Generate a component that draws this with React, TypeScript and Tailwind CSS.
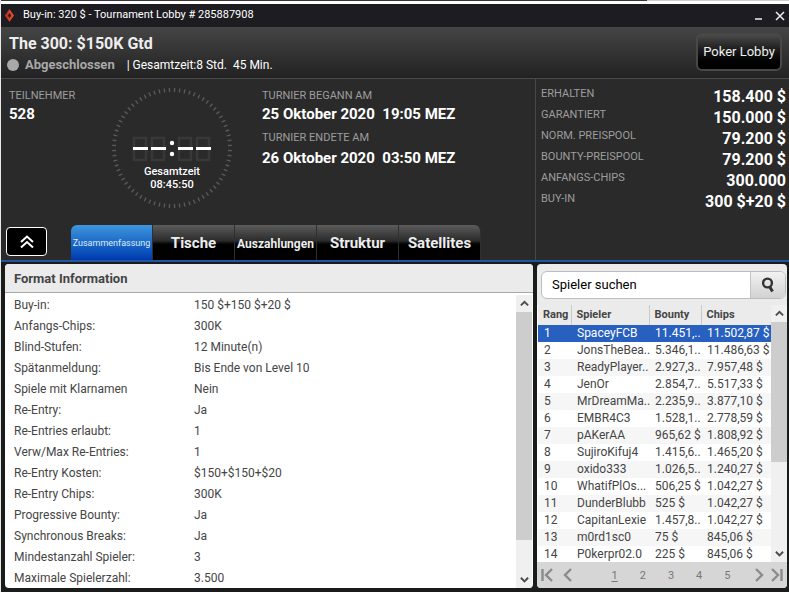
import { useState } from "react";

const FORMAT: [string, string][] = [
  ["Buy-in:", "150 $+150 $+20 $"],
  ["Anfangs-Chips:", "300K"],
  ["Blind-Stufen:", "12 Minute(n)"],
  ["Spätanmeldung:", "Bis Ende von Level 10"],
  ["Spiele mit Klarnamen", "Nein"],
  ["Re-Entry:", "Ja"],
  ["Re-Entries erlaubt:", "1"],
  ["Verw/Max Re-Entries:", "1"],
  ["Re-Entry Kosten:", "$150+$150+$20"],
  ["Re-Entry Chips:", "300K"],
  ["Progressive Bounty:", "Ja"],
  ["Synchronous Breaks:", "Ja"],
  ["Mindestanzahl Spieler:", "3"],
  ["Maximale Spielerzahl:", "3.500"],
];

const PLAYERS = [
  { name: "SpaceyFCB", bounty: "11.451,..", chips: "11.502,87 $" },
  { name: "JonsTheBea..", bounty: "5.346,1..", chips: "11.486,63 $" },
  { name: "ReadyPlayer..", bounty: "2.927,3..", chips: "7.957,48 $" },
  { name: "JenOr", bounty: "2.854,7..", chips: "5.517,33 $" },
  { name: "MrDreamMa..", bounty: "2.235,9..", chips: "3.877,10 $" },
  { name: "EMBR4C3", bounty: "1.528,1..", chips: "2.778,59 $" },
  { name: "pAKerAA", bounty: "965,62 $", chips: "1.808,92 $" },
  { name: "SujiroKifuj4", bounty: "1.415,6..", chips: "1.465,20 $" },
  { name: "oxido333", bounty: "1.026,5..", chips: "1.240,27 $" },
  { name: "WhatifPlOs...", bounty: "506,25 $", chips: "1.042,27 $" },
  { name: "DunderBlubb", bounty: "525 $", chips: "1.042,27 $" },
  { name: "CapitanLexie", bounty: "1.457,8..", chips: "1.042,27 $" },
  { name: "m0rd1sc0", bounty: "75 $", chips: "845,06 $" },
  { name: "P0kerpr02.0", bounty: "225 $", chips: "845,06 $" },
];

const PRIZES = [
  ["ERHALTEN", "158.400 $"],
  ["GARANTIERT", "150.000 $"],
  ["NORM. PREISPOOL", "79.200 $"],
  ["BOUNTY-PREISPOOL", "79.200 $"],
  ["ANFANGS-CHIPS", "300.000"],
  ["BUY-IN", "300 $+20 $"],
];

const TABS = [
  { label: "Zusammenfassung", size: "text-[9px]" },
  { label: "Tische", size: "text-[15px] font-bold" },
  { label: "Auszahlungen", size: "text-[12px] font-bold" },
  { label: "Struktur", size: "text-[15px] font-bold" },
  { label: "Satellites", size: "text-[15px] font-bold" },
];

const TICKS = Array.from({ length: 72 }, (_, i) => i * 5 + 2.5);

function Clock() {
  return (
    <div className="relative size-[120px] shrink-0">
      <svg viewBox="0 0 120 120" className="size-full" aria-hidden>
        {TICKS.map((deg) => (
          <path key={deg} d="M60 0v4" stroke="#595959" strokeWidth="1.4" transform={`rotate(${deg} 60 60)`} />
        ))}
        {[22, 40, 67, 85].map((x) => (
          <g key={x} fill="none">
            <path d={`M${x} 50h12v22h-12z`} stroke="#383838" strokeWidth="2.6" />
            <path d={`M${x - 1} 60.5h15`} stroke="#fff" strokeWidth="3" />
          </g>
        ))}
        <circle cx="60" cy="55" r="2.2" fill="#fff" />
        <circle cx="60" cy="66" r="2.2" fill="#fff" />
      </svg>
      <p className="absolute inset-x-0 top-[77px] text-center text-[11px] leading-[13px] font-medium text-white">
        Gesamtzeit
        <br />
        08:45:50
      </p>
    </div>
  );
}

function Chevron({ up = false }: { up?: boolean }) {
  return (
    <svg viewBox="0 0 10 8" className="w-[9px]" fill="none" stroke="#4c4c4c" strokeWidth="2.2" aria-hidden>
      <path d={up ? "M1 6l4-4 4 4" : "M1 2l4 4 4-4"} />
    </svg>
  );
}

function ScrollBar({ thumb }: { thumb: string }) {
  return (
    <div className="flex w-4 shrink-0 flex-col bg-[#f0f0f0]">
      <button aria-label="Nach oben" className="flex h-[17px] items-center justify-center">
        <Chevron up />
      </button>
      <div className="min-h-0 flex-1">
        <div className={`bg-[#cdcdcd] ${thumb}`} />
      </div>
      <button aria-label="Nach unten" className="flex h-[17px] items-center justify-center">
        <Chevron />
      </button>
    </div>
  );
}

function PageArrow({ label, d }: { label: string; d: string }) {
  return (
    <button aria-label={label} className="flex items-center">
      <svg viewBox="0 0 12 14" className="h-[14px] w-3" fill="none" stroke="#8b8b8b" strokeWidth="2.4" aria-hidden>
        <path d={d} />
      </svg>
    </button>
  );
}

export default function App() {
  const [tab, setTab] = useState(0);
  const [page, setPage] = useState(1);

  return (
    <div className="flex h-screen min-h-[480px] flex-col overflow-hidden border-l border-[#e8e8e8] bg-[#1a1c1c] font-[Roboto,sans-serif] text-[12px] text-white">
      <div className="flex h-1 shrink-0 flex-col bg-white">
        <div className="flex h-px">
          <div className="w-[82%] bg-[#3b3438]" />
          <div className="flex-1 bg-[#cfcfcf]" />
        </div>
      </div>

      <div className="flex h-[23px] shrink-0 items-center bg-[#1d1c21] pr-1 pl-1">
        <svg viewBox="0 0 10 14" className="h-[13px] w-[9px]" aria-hidden>
          <path d="M5 0l5 7-5 7-5-7z" fill="#e2492b" />
          <path d="M5 4l2 3-2 3-2-3z" fill="#3b1915" />
          <path d="M5 0L0 7l5 7-2-7z" fill="#b33424" />
        </svg>
        <span className="ml-[9px] flex-1 pb-px text-[11px]">Buy-in: 320 $ - Tournament Lobby # 285887908</span>
        <button aria-label="Minimieren" className="mr-3">
          <svg viewBox="0 0 9 10" className="h-[10px] w-[9px]" aria-hidden>
            <path d="M1 8h7" stroke="#fff" strokeWidth="1.4" />
          </svg>
        </button>
        <button aria-label="Schließen">
          <svg viewBox="0 0 10 10" className="size-[10px]" aria-hidden>
            <path d="M1 1l8 8M9 1L1 9" stroke="#e8e8e8" strokeWidth="1.6" />
          </svg>
        </button>
      </div>

      <header className="flex h-[52px] shrink-0 items-start justify-between border-b border-[#4a4a4a] bg-linear-to-b from-[#454545] to-[#222222] pt-[6px] pr-[7px] pl-2">
        <div>
          <h1 className="text-[16px] leading-[22px] font-bold text-[#ededed]">The 300: $150K Gtd</h1>
          <p className="flex items-center text-[12px] leading-5">
            <span className="-ml-0.5 size-3 rounded-full bg-[#a9a9a9]" />
            <span className="ml-1.5 text-[13px] font-bold text-[#a9a9a9]">Abgeschlossen</span>
            <span className="ml-3 whitespace-pre">| Gesamtzeit:8 Std.  45 Min.</span>
          </p>
        </div>
        <button className="h-[38px] w-[86px] rounded-md border-2 border-[#484848] bg-linear-to-b from-[#4a4a4a] via-[#161616] via-50% to-black pb-px text-[13px] text-[#f0f0f0]">
          Poker Lobby
        </button>
      </header>

      <div className="flex h-[183px] shrink-0 border-b-2 border-[#22559d] bg-[#2a2a2a]">
        <div className="flex min-w-0 flex-1 flex-col justify-between">
          <div className="flex pt-[9px] pl-2">
            <div className="w-[103px]">
              <p className="text-[11px] leading-4 text-[#9d9d9d]">TEILNEHMER</p>
              <p className="text-[15px] leading-5 font-bold">528</p>
            </div>
            <Clock />
            <div className="ml-[30px]">
              <p className="text-[11px] leading-4 text-[#9d9d9d]">TURNIER BEGANN AM</p>
              <p className="text-[15px] leading-5 font-bold whitespace-pre">25 Oktober 2020  19:05 MEZ</p>
              <p className="mt-1.5 text-[11px] leading-4 text-[#9d9d9d]">TURNIER ENDETE AM</p>
              <p className="mt-0.5 text-[15px] leading-5 font-bold whitespace-pre">26 Oktober 2020  03:50 MEZ</p>
            </div>
          </div>
          <div className="flex items-end">
            <button aria-label="Einklappen" className="mb-1 ml-[5px] flex h-[29px] w-[41px] items-center justify-center rounded border border-white bg-black">
              <svg viewBox="0 0 14 13" className="h-[13px] w-[14px]" fill="none" stroke="#fff" strokeWidth="2" aria-hidden>
                <path d="M1 7l6-5.5L13 7M1 12.5L7 7l6 5.5" />
              </svg>
            </button>
            <nav className="ml-6 flex">
              {TABS.map((t, i) => (
                <button
                  key={t.label}
                  onClick={() => setTab(i)}
                  className={`h-[35px] w-[82px] border-r border-[#2f2f2f] pt-0.5 first:rounded-tl-md last:rounded-tr-md ${t.size} ${
                    tab === i
                      ? "bg-linear-to-b from-[#3f96dc] to-[#0439b0] text-[#dcebff]"
                      : "bg-linear-to-b from-[#5c5c5c] from-0% via-[#2c2c2c] via-45% to-black to-60% text-[#ededed]"
                  }`}
                >
                  {t.label}
                </button>
              ))}
            </nav>
          </div>
        </div>
        <dl className="w-[254px] shrink-0 border-l border-[#484848] pt-[7px] pr-[3px] pl-[5px]">
          {PRIZES.map(([label, value]) => (
            <div key={label} className="flex h-[21px] justify-between">
              <dt className="text-[11px] leading-4 text-[#9d9d9d]">{label}</dt>
              <dd className="text-[16px] leading-[21px] font-bold">{value}</dd>
            </div>
          ))}
        </dl>
      </div>

      <main className="flex min-h-0 flex-1 gap-1 pt-0.5 pr-0.5 pb-1 pl-1">
        <section className="flex min-w-0 flex-1 flex-col overflow-hidden rounded bg-white text-[#454545]">
          <h2 className="h-[29px] shrink-0 border-b border-[#a8a8a8] bg-[#ebebeb] pl-[9px] text-[13px] leading-[29px] font-bold text-[#444]">
            Format Information
          </h2>
          <div className="flex min-h-0 flex-1">
            <div className="min-w-0 flex-1 overflow-hidden pt-px">
              <table className="w-full table-fixed text-left">
                <tbody>
                  {FORMAT.map(([label, value]) => (
                    <tr key={label} className="h-[21px]">
                      <th scope="row" className="w-[189px] p-0 pl-[9px] font-normal">{label}</th>
                      <td className="p-0">{value}</td>
                    </tr>
                  ))}
                </tbody>
              </table>
            </div>
            <div className="mt-0.5 mr-px flex">
              <ScrollBar thumb="h-[88%]" />
            </div>
          </div>
        </section>

        <aside className="flex w-[250px] shrink-0 flex-col overflow-hidden rounded bg-[#ebebeb] text-[#454545]">
          <form className="mt-[7px] mr-px ml-1 flex h-7 shrink-0 overflow-hidden rounded-md border border-[#bdbdbd] bg-white">
            <input
              aria-label="Spieler suchen"
              defaultValue="Spieler suchen"
              className="min-w-0 flex-1 pl-2.5 text-[13px] text-black outline-none"
            />
            <button type="button" aria-label="Suchen" className="flex w-[35px] items-center justify-center border-l border-[#c4c4c4] bg-linear-to-b from-[#f2f2f2] to-[#d2d2d2]">
              <svg viewBox="0 0 14 16" className="h-4 w-[14px]" fill="none" stroke="#333" aria-hidden>
                <circle cx="6.5" cy="6" r="4.4" strokeWidth="2.4" />
                <path d="M8.5 9.5l3 5" strokeWidth="3" />
              </svg>
            </button>
          </form>
          <div className="mt-1.5 flex min-h-0 flex-1 bg-white pl-px">
            <div className="min-w-0 flex-1 overflow-hidden">
              <table className="w-full table-fixed text-left whitespace-nowrap">
                <thead className="bg-[#ebebeb]">
                  <tr className="h-5 text-[11px]">
                    <th className="w-[33px] border-r border-[#c9c9c9] p-0 pl-[5px]">Rang</th>
                    <th className="w-[78px] border-r border-[#c9c9c9] p-0 pl-[5px]">Spieler</th>
                    <th className="w-[52px] border-r border-[#c9c9c9] p-0 pl-[5px]">Bounty</th>
                    <th className="p-0 pl-[5px]">Chips</th>
                  </tr>
                </thead>
                <tbody>
                  {PLAYERS.map((p, i) => (
                    <tr key={p.name} className={`h-[17px] leading-[17px] ${i === 0 ? "bg-[#2860c0] text-white" : i % 2 === 0 ? "bg-[#f6f6f6]" : "bg-white"}`}>
                      <td className="p-0 pl-1.5">{i + 1}</td>
                      <td className="p-0 pl-1.5">{p.name}</td>
                      <td className="p-0 pl-1.5">{p.bounty}</td>
                      <td className="p-0 pl-1.5">{p.chips}</td>
                    </tr>
                  ))}
                </tbody>
              </table>
            </div>
            <ScrollBar thumb="h-[63%]" />
          </div>
          <footer className="flex h-[26px] shrink-0 items-center justify-between bg-[#d6d6d6] px-1">
            <div className="flex gap-2.5">
              <PageArrow label="Erste Seite" d="M1.5 1v12M11 1L5 7l6 6" />
              <PageArrow label="Vorherige Seite" d="M8 1L2 7l6 6" />
            </div>
            <div className="flex gap-[22px] pt-0.5 pl-3.5 text-[11px] text-[#777]">
              {[1, 2, 3, 4, 5].map((n) => (
                <button key={n} onClick={() => setPage(n)} className={page === n ? "underline underline-offset-2" : ""}>
                  {n}
                </button>
              ))}
            </div>
            <div className="flex gap-1.5">
              <PageArrow label="Nächste Seite" d="M3 1l6 6-6 6" />
              <PageArrow label="Letzte Seite" d="M1 1l6 6-6 6M10.5 1v12" />
            </div>
          </footer>
        </aside>
      </main>
    </div>
  );
}
